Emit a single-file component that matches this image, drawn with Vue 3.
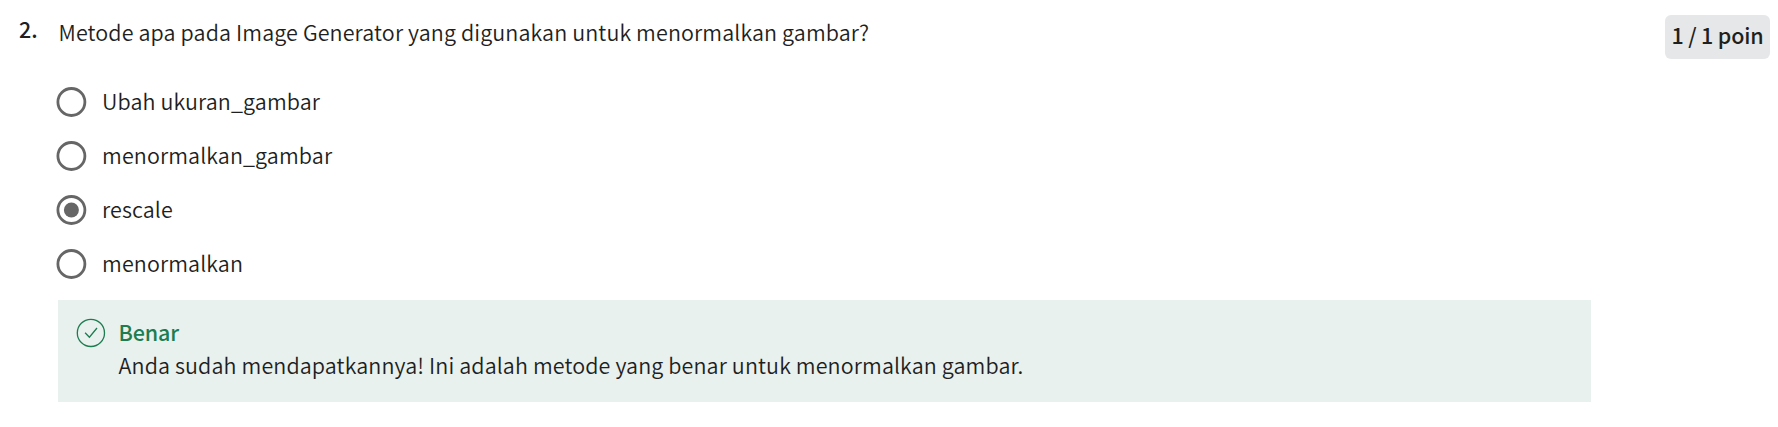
<script setup>
const options = [
  { label: 'Ubah ukuran_gambar', checked: false },
  { label: 'menormalkan_gambar', checked: false },
  { label: 'rescale', checked: true },
  { label: 'menormalkan', checked: false },
]
</script>

<template>
  <section class="quiz">
    <div class="number">2.</div>
    <main class="body">
      <p class="prompt">Metode apa pada Image Generator yang digunakan untuk menormalkan gambar?</p>
      <div class="options">
        <div v-for="o in options" :key="o.label" class="option">
          <svg class="radio" width="31" height="30" viewBox="0 0 31 30">
            <circle cx="15.4" cy="15" r="13.5" fill="none" stroke="#666" stroke-width="2.8" />
            <circle v-if="o.checked" cx="15.4" cy="15" r="7.5" fill="#666" />
          </svg>
          <span class="label">{{ o.label }}</span>
        </div>
      </div>
      <div class="feedback">
        <svg class="check" width="30" height="30" viewBox="0 0 30 30" fill="none">
          <circle cx="14.9" cy="14.9" r="13.6" stroke="#1d7c50" stroke-width="1.3" />
          <path d="M9.1 14.7L13.4 19.2L21 10" stroke="#1d7c50" stroke-width="1.3" />
        </svg>
        <div class="message">
          <div class="title">Benar</div>
          <div class="text">Anda sudah mendapatkannya! Ini adalah metode yang benar untuk menormalkan gambar.</div>
        </div>
      </div>
    </main>
    <div class="points">1 / 1 poin</div>
  </section>
</template>

<style>
body {
  background: #fff;
}
</style>

<style scoped>
.quiz {
  display: flex;
  align-items: flex-start;
  box-sizing: border-box;
  height: 427px;
  padding-right: 8px;
  font-family: "Noto Sans CJK SC", "Noto Sans", sans-serif;
  font-size: 21.49px;
  font-weight: 350;
  letter-spacing: 0.115px;
  color: #1f1f1f;
  white-space: nowrap;
}
.number {
  width: 39px;
  padding: 12px 0 0 19px;
  line-height: 33px;
  font-weight: 500;
}
.body {
  width: 1533px;
}
.prompt {
  margin: 0;
  padding: 15px 0 0 0.5px;
  line-height: 33px;
}
.options {
  padding-top: 27px;
}
.option {
  display: flex;
  align-items: center;
  height: 54px;
  margin-left: -2px;
}
.label {
  padding: 0 0 3px 15px;
  line-height: 32px;
}
.feedback {
  display: flex;
  box-sizing: border-box;
  height: 102px;
  margin-top: 9px;
  padding: 18px 0 0 18px;
  background: #e8f1ee;
}
.message {
  padding-left: 12.5px;
}
.title {
  margin-top: -3px;
  line-height: 33px;
  font-weight: 500;
  letter-spacing: -0.15px;
  color: #1d7c50;
}
.text {
  line-height: 33px;
}
.points {
  box-sizing: border-box;
  width: 105px;
  height: 44px;
  margin: 15px 0 0 auto;
  border-radius: 6px;
  background: #e5e7e8;
  line-height: 39px;
  text-align: center;
  font-weight: 500;
  letter-spacing: -0.15px;
}
</style>
